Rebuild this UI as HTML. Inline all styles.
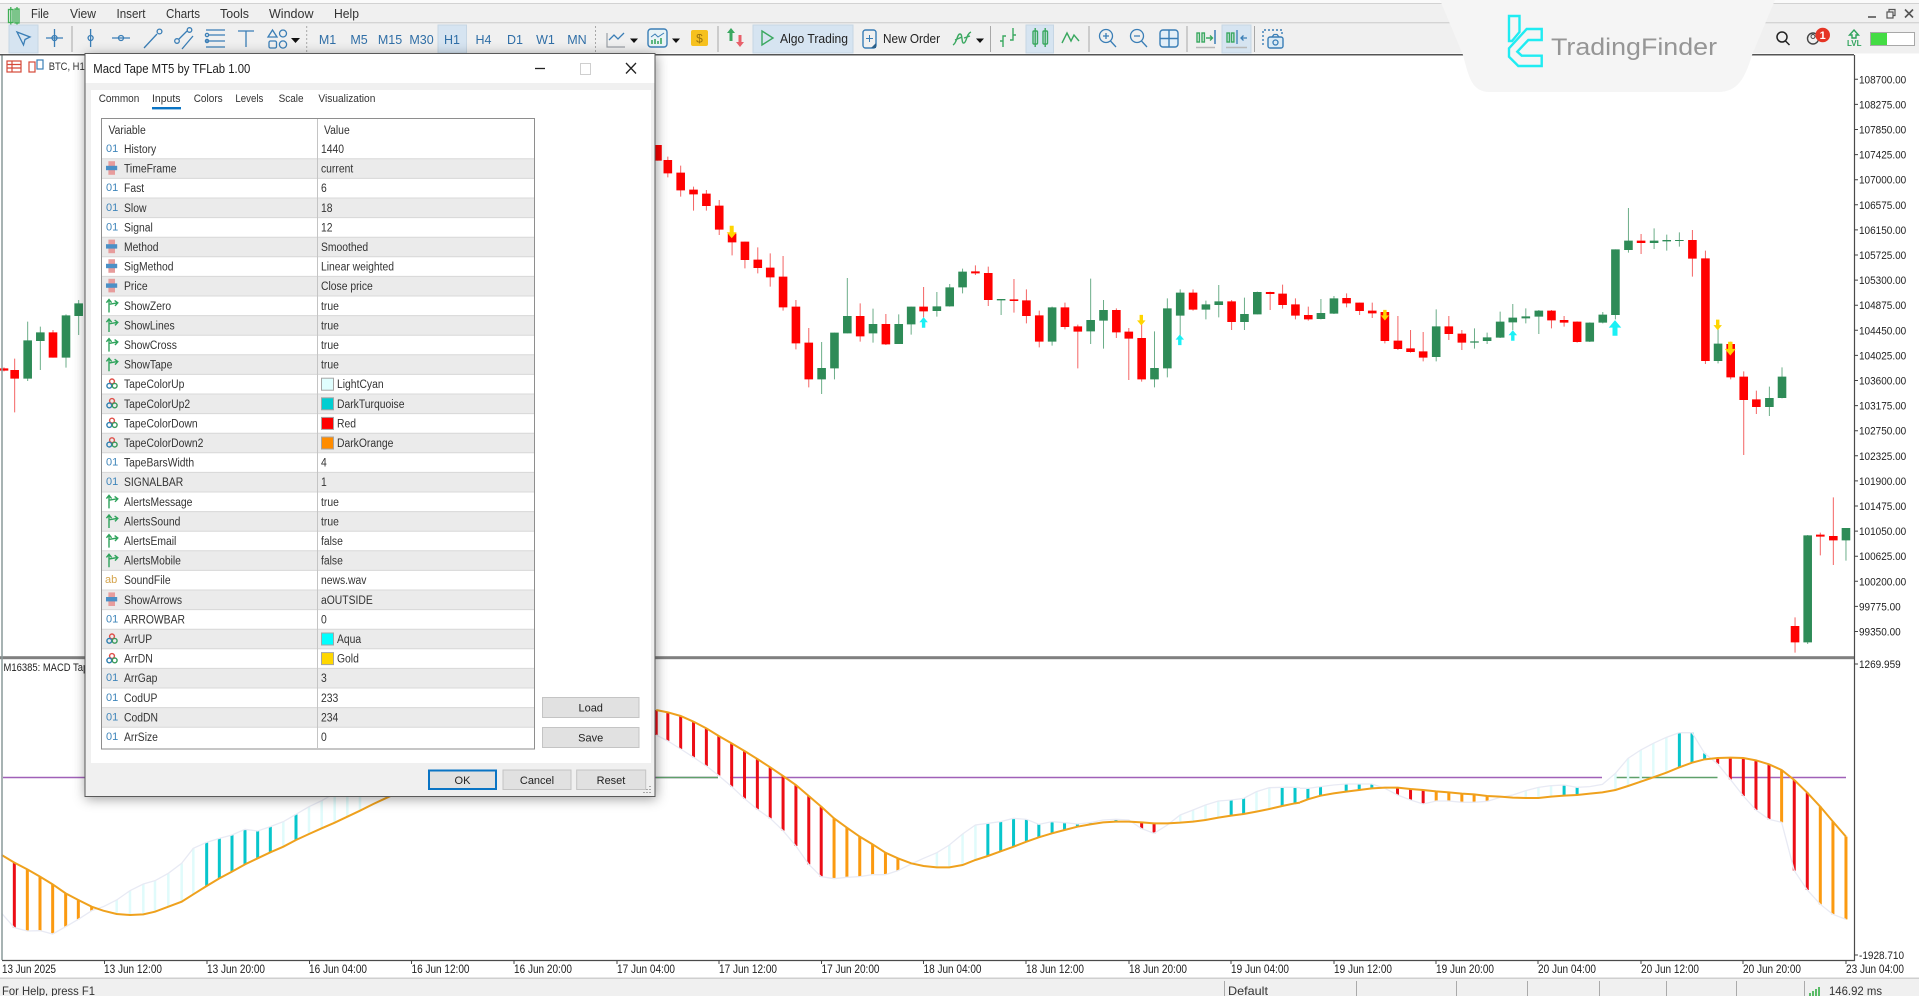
<!DOCTYPE html>
<html lang="en"><head><meta charset="utf-8"><title>Macd Tape MT5 by TFLab</title>
<style>
html,body{margin:0;padding:0;background:#fff;width:1919px;height:996px;overflow:hidden}
svg{display:block;font-family:"Liberation Sans",sans-serif;filter:blur(.35px)}
.n{fill:none;vector-effect:non-scaling-stroke}
.rw{stroke:#f03030;stroke-width:1;stroke-opacity:.75}
.gw{stroke:#2e8b57;stroke-width:1;stroke-opacity:.7}
.rb{stroke:#ff0000;stroke-width:8.6}
.gb{stroke:#2e8b57;stroke-width:8.6}
.sig{stroke:#efa11d;stroke-width:2}
.mac{stroke:#e8eaf4;stroke-width:1.3}
.br{stroke:#ec0d16;stroke-width:3}
.bo{stroke:#fb9a10;stroke-width:3}
.bt{stroke:#08c6cc;stroke-width:3}
.bl{stroke:#e0fbfb;stroke-width:2.5}
.i{fill:none;stroke:#3a7eb6;stroke-width:1.3}
.g{fill:none;stroke:#3aa860;stroke-width:1.4}
.tf{font-size:12.5px;fill:#2f6ea6;text-anchor:middle}
.btn{fill:#e1e1e1;stroke:#c4c4c4}
.bt2{font-size:11px;fill:#222;text-anchor:middle}
.one{font-size:11px;fill:#3f85ba}
</style></head><body>
<svg width="1919" height="996" viewBox="0 0 1919 996" xmlns="http://www.w3.org/2000/svg">
<defs>
<filter id="sh" x="-8%" y="-8%" width="116%" height="116%"><feDropShadow dx="1" dy="2" stdDeviation="6" flood-color="#000" flood-opacity=".38"/></filter>
<g id="en"><rect x="-3.2" y="-6.8" width="6.6" height="13.6" fill="#e79c9c"/><rect x="-5.6" y="-2.2" width="11.2" height="4.4" fill="#4b90c6"/></g>
<g id="bo"><path d="M-3 7V-5.5M-5.6-2.8-3-6-.4-2.8M-3-1.2 5-2.6M2.6-5 5.8-2.6 3 .4" fill="none" stroke="#2fa35c" stroke-width="1.4"/></g>
<g id="co" fill="none" stroke-width="1.4"><circle cx="0" cy="-2.6" r="2.4" stroke="#e0504a"/><circle cx="-2.7" cy="1.8" r="2.4" stroke="#2f7fb0"/><circle cx="2.7" cy="1.8" r="2.4" stroke="#3a9a5c"/></g>
<path id="up" d="M0-6.5 5-.5H2V6H-2V-.5H-5Z"/>
<path id="dn" d="M0 6.5 5 .5H2V-6H-2V.5H-5Z"/>
</defs>

<rect width="1919" height="996" fill="#fff"/>

<!-- left candles -->
<g transform="translate(0 280) scale(.33333)">
<path class="n rw" d="M12 262V274M44 236V397M159 150V233"/>
<path class="n gw" d="M83 125V303M121 140V270M198 103V263M236 60V165"/>
<path class="n rb" d="M12 265V272M44 270V296M159 157V233"/>
<path class="n gb" d="M83 181V296M121 157V183M198 106V233M236 70V108"/>
</g>
<!-- middle candles -->
<g transform="translate(650 120) scale(.41454 .33333)">
<path class="n rw" d="M18 75V122M43 110V172M74 137V230M105 200V272M136 210V272M167 240V345M198 330V406M229 365V445M260 382V460M290 400V500M321 408V572M352 540V688M383 624V802M507 550V665M569 582V675M660 501V592M785 436V465M816 440V558M878 477V578M908 508V610M939 572V682M1001 548V628M1032 614V745M1125 565V654M1155 624V780M1186 600V785M1310 508V572M1403 540V630M1496 515V570M1526 494V566M1557 535V598"/>
<path class="n gw" d="M414 666V822M445 638V778M476 474V640M538 566V668M600 583V672M630 560V644M692 516V590M723 492V560M754 446V520M847 537V585M970 560V677M1063 476V672M1094 540V686M1217 634V802M1248 535V772M1279 508V650M1341 542V598M1372 495V592M1434 533V630M1465 515V583"/>
<path class="n rb" d="M18 75V122M43 120V160M74 158V211M105 209V223M136 221V258M167 257V329M198 340V367M229 365V420M260 419V444M290 443V472M321 470V562M352 560V670M383 668V778M507 588V649M569 612V673M660 560V574M785 454V460M816 459V540M878 538V543M908 541V588M939 586V665M1001 562V621M1032 619V635M1125 570V637M1155 635V656M1186 654V778M1310 518V569M1403 544V606M1496 516V522M1526 521V555M1557 553V587"/>
<path class="n gb" d="M414 744V778M445 638V745M476 588V640M538 612V640M600 612V672M630 560V613M692 559V573M723 502V559M754 455V502M847 537V541M970 562V665M1063 600V634M1094 570V602M1217 744V778M1248 565V745M1279 518V587M1341 553V569M1372 544V555M1434 582V606M1465 516V583"/>
</g>
<!-- right candles -->
<g transform="translate(1300 190) scale(.39477 .33333)">
<path class="n rw" d="M21 350V392M118 310V352M151 338V375M183 338V384M215 365V460M248 378V480M280 420V488M312 426V514M377 378V450M410 420V480M637 360V415M669 378V410M702 394V458M864 132V192M994 120V260M1027 182V522M1091 455V568M1124 544V795M1156 602V672M1254 1282V1388M1318 1028V1096M1351 922V1125"/>
<path class="n gw" d="M53 327V388M86 318V372M345 358V514M442 415V476M474 428V462M507 365V444M539 342V420M572 355V400M605 360V432M734 397V456M767 366V400M799 178V388M832 54V188M897 115V177M929 134V182M961 127V170M1059 395V520M1189 590V678M1221 532V625M1286 1035V1362M1383 1014V1112"/>
<path class="n rb" d="M21 375V388M118 324V340M151 338V363M183 362V370M215 366V453M248 452V477M280 475V486M312 484V503M377 409V432M410 431V458M637 362V391M669 390V398M702 395V456M864 152V159M994 150V206M1027 205V513M1091 462V562M1124 560V630M1156 628V651M1254 1308V1357M1318 1034V1040M1351 1038V1051"/>
<path class="n gb" d="M53 369V387M86 325V371M345 409V501M442 454V458M474 442V453M507 395V443M539 383V397M572 379V385M605 362V380M734 398V455M767 374V398M799 178V375M832 152V180M897 152V159M929 150V154M961 150V153M1059 461V513M1189 624V651M1221 560V624M1286 1036V1357M1383 1014V1051"/>
</g>
<!-- arrows -->
<g fill="#ffd500">
<use href="#dn" transform="translate(731.7 231.7)"/>
<use href="#dn" transform="translate(1141.3 320) scale(.85)"/>
<use href="#dn" transform="translate(1384.9 315) scale(.85)"/>
<use href="#dn" transform="translate(1717.7 324.7) scale(.85)"/>
<use href="#dn" transform="translate(1730.3 348.3) scale(1.1)"/>
</g>
<g fill="#1af0f5">
<use href="#up" transform="translate(923.6 322.7) scale(.85)"/>
<use href="#up" transform="translate(1179.8 340) scale(.85)"/>
<use href="#up" transform="translate(1512.8 335.7) scale(.85)"/>
<use href="#up" transform="translate(1615 328.3) scale(1.25)"/>
</g>

<!-- zero level -->
<path d="M3 777.5H718M730 777.5H1602M1730 777.5H1846" fill="none" stroke="#a061b8" stroke-width="1.5"/>
<path d="M656 777.5H718M1615 777.5H1717.5" fill="none" stroke="#5fa06a" stroke-width="1.5"/>

<!-- indicator left -->
<g transform="translate(0 760) scale(.33333)">
<path class="n bl" d="M350 420V462M390 392V465M430 372V463M465 362V455M505 340V440M545 310V425M580 265V403M850 185V260M927 140V222M965 122V205M1004 110V188M1042 110V170M1080 110V152"/>
<path class="n br" d="M43 308V503"/>
<path class="n bo" d="M82 328V513M120 350V512M158 373V522M197 400V500M235 420V478M275 440V452"/>
<path class="n bt" d="M620 247V378M658 235V355M696 225V335M735 208V313M773 213V295M811 200V277M888 163V240"/>
<polyline class="n mac" points="5,460 43,503 82,513 120,512 158,522 197,500 235,478 275,452 310,440 350,420 390,392 430,372 465,362 505,340 545,310 580,265 620,247 658,235 696,225 735,208 773,213 811,200 850,185 888,163 927,140 965,122 1004,100"/>
<polyline class="n sig" points="5,285 43,308 82,328 120,350 158,373 197,400 235,420 275,440 310,452 350,462 390,465 430,463 465,455 505,440 545,425 580,403 620,378 658,355 696,335 735,313 773,295 811,277 850,260 888,240 927,222 965,205 1004,188 1042,170 1080,152 1120,132 1180,104"/>
</g>
<!-- indicator middle -->
<g transform="translate(650 660) scale(.41454 .33333)">
<path class="n bl" d="M692 578V622M722 555V622M754 522V615M785 495V600M1279 465V488M1310 450V485M1340 435V480M1371 423V473M1463 395V455M1494 383V447"/>
<path class="n br" d="M15 150V225M43 157V243M74 168V267M105 185V292M136 205V318M166 228V347M197 250V380M228 273V416M259 297V448M290 322V475M321 348V512M352 375V558M383 408V613M413 440V650M1186 487V506M1216 490V520"/>
<path class="n bo" d="M444 475V656M475 503V652M506 530V650M537 553V644M568 578V644M598 595V632"/>
<path class="n bt" d="M815 490V588M846 485V574M877 475V560M908 478V545M938 493V532M970 485V520M1000 488V510M1031 492V500M1062 488V493M1124 478V485M1402 420V467M1432 415V462M1525 382V438M1556 382V430"/>
<polyline class="n mac" points="15,225 43,243 74,267 105,292 136,318 166,347 197,380 228,416 259,448 290,475 321,512 352,558 383,613 413,650 444,656 475,652 506,650 537,644 568,644 598,632 630,612 660,595 692,578 722,555 754,522 785,495 815,490 846,485 877,475 908,478 938,493 970,485 1000,488 1031,492 1062,488 1093,480 1124,478 1155,480 1186,506 1216,520 1248,495 1279,465 1310,450 1340,435 1371,423 1402,420 1432,415 1463,395 1494,383 1525,382 1556,382 1568,383"/>
<polyline class="n sig" points="15,150 43,157 74,168 105,185 136,205 166,228 197,250 228,273 259,297 290,322 321,348 352,375 383,408 413,440 444,475 475,503 506,530 537,553 568,578 598,595 630,610 660,618 692,622 722,622 754,615 785,600 815,588 846,574 877,560 908,545 938,532 970,520 1000,510 1031,500 1062,493 1093,487 1124,485 1155,485 1186,487 1216,490 1248,490 1279,488 1310,485 1340,480 1371,473 1402,467 1432,462 1463,455 1494,447 1525,438 1556,430 1568,428"/>
</g>
<!-- indicator right -->
<g transform="translate(1300 660) scale(.39477 .33333)">
<path class="n bl" d="M572 392V414M604 382V414M636 377V410M799 340V390M831 295V378M863 270V365M895 250V352M928 232V338"/>
<path class="n br" d="M247 383V405M280 387V420M312 390V432M1058 294V312M1090 293V358M1123 294V408M1155 301V450M1188 313V478M1252 360V632M1285 398V690"/>
<path class="n bo" d="M345 394V423M377 397V423M410 401V427M441 403V427M474 408V424M1220 330V487M1318 440V733M1350 485V763M1383 530V778"/>
<path class="n bt" d="M20 385V418M52 380V407M117 372V395M150 372V390M182 372V385M669 375V407M702 382V405M961 218V322M993 218V308M1025 280V298"/>
<polyline class="n mac" points="0,385 20,385 52,380 85,375 117,372 150,372 182,372 215,385 247,405 280,420 312,432 345,423 377,423 410,427 441,427 474,424 507,412 539,405 572,392 604,382 636,377 669,375 702,382 734,380 766,373 799,340 831,295 863,270 895,250 928,232 961,218 993,218 1025,280 1058,312 1090,358 1123,408 1155,450 1188,478 1220,487 1252,632 1285,690 1318,733 1350,763 1383,778"/>
<polyline class="n sig" points="0,427 20,418 52,407 85,400 117,395 150,390 182,385 215,383 247,383 280,387 312,390 345,394 377,397 410,401 441,403 474,408 507,410 539,413 572,414 604,414 636,410 669,407 702,405 734,401 766,397 799,390 831,378 863,365 895,352 928,338 961,322 993,308 1025,298 1058,294 1090,293 1123,294 1155,301 1188,313 1220,330 1252,360 1285,398 1318,440 1350,485 1383,530"/>
</g>

<!-- frames -->
<rect x="0" y="656.2" width="1854" height="3" fill="#808080"/>
<path d="M2 55V960" stroke="#8a9a9a" stroke-width="1.5" fill="none"/>
<path d="M1854.5 55V961M2 960.5H1855" stroke="#4a4a4a" stroke-width="1.2" fill="none"/>
<path d="M1854 79.3h4M1854 104.4h4M1854 129.5h4M1854 154.6h4M1854 179.7h4M1854 204.8h4M1854 229.9h4M1854 255h4M1854 280.1h4M1854 305.2h4M1854 330.3h4M1854 355.4h4M1854 380.5h4M1854 405.6h4M1854 430.7h4M1854 455.8h4M1854 480.9h4M1854 506h4M1854 531.1h4M1854 556.2h4M1854 581.3h4M1854 606.4h4M1854 631.5h4M1854 664h4M1854 955h4M104.5 961v3M207 961v3M309.5 961v3M411.5 961v3M514 961v3M617 961v3M719 961v3M821.5 961v3M923.5 961v3M1026 961v3M1129 961v3M1231 961v3M1334 961v3M1436 961v3M1538 961v3M1641 961v3M1743 961v3M1846 961v3" stroke="#444" fill="none"/>

<!-- price labels -->
<g transform="translate(1859 0) scale(.87 1)" font-size="11.5" fill="#222">
<text y="83.3">108700.00</text><text y="108.4">108275.00</text><text y="133.5">107850.00</text><text y="158.6">107425.00</text><text y="183.7">107000.00</text><text y="208.8">106575.00</text><text y="233.9">106150.00</text><text y="259">105725.00</text><text y="284.1">105300.00</text><text y="309.2">104875.00</text><text y="334.3">104450.00</text><text y="359.4">104025.00</text><text y="384.5">103600.00</text><text y="409.6">103175.00</text><text y="434.7">102750.00</text><text y="459.8">102325.00</text><text y="484.9">101900.00</text><text y="510">101475.00</text><text y="535.1">101050.00</text><text y="560.2">100625.00</text><text y="585.3">100200.00</text><text y="610.4">99775.00</text><text y="635.5">99350.00</text><text y="668">1269.959</text><text y="959">-1928.710</text>
</g>
<!-- time labels -->
<g font-size="11.5" fill="#222">
<text x="2" y="973" textLength="54" lengthAdjust="spacingAndGlyphs">13 Jun 2025</text>
<text x="104" y="973" textLength="58" lengthAdjust="spacingAndGlyphs">13 Jun 12:00</text>
<text x="207" y="973" textLength="58" lengthAdjust="spacingAndGlyphs">13 Jun 20:00</text>
<text x="309" y="973" textLength="58" lengthAdjust="spacingAndGlyphs">16 Jun 04:00</text>
<text x="411.5" y="973" textLength="58" lengthAdjust="spacingAndGlyphs">16 Jun 12:00</text>
<text x="514" y="973" textLength="58" lengthAdjust="spacingAndGlyphs">16 Jun 20:00</text>
<text x="617" y="973" textLength="58" lengthAdjust="spacingAndGlyphs">17 Jun 04:00</text>
<text x="719" y="973" textLength="58" lengthAdjust="spacingAndGlyphs">17 Jun 12:00</text>
<text x="821.5" y="973" textLength="58" lengthAdjust="spacingAndGlyphs">17 Jun 20:00</text>
<text x="923.5" y="973" textLength="58" lengthAdjust="spacingAndGlyphs">18 Jun 04:00</text>
<text x="1026" y="973" textLength="58" lengthAdjust="spacingAndGlyphs">18 Jun 12:00</text>
<text x="1129" y="973" textLength="58" lengthAdjust="spacingAndGlyphs">18 Jun 20:00</text>
<text x="1231" y="973" textLength="58" lengthAdjust="spacingAndGlyphs">19 Jun 04:00</text>
<text x="1334" y="973" textLength="58" lengthAdjust="spacingAndGlyphs">19 Jun 12:00</text>
<text x="1436" y="973" textLength="58" lengthAdjust="spacingAndGlyphs">19 Jun 20:00</text>
<text x="1538" y="973" textLength="58" lengthAdjust="spacingAndGlyphs">20 Jun 04:00</text>
<text x="1641" y="973" textLength="58" lengthAdjust="spacingAndGlyphs">20 Jun 12:00</text>
<text x="1743" y="973" textLength="58" lengthAdjust="spacingAndGlyphs">20 Jun 20:00</text>
<text x="1846" y="973" textLength="58" lengthAdjust="spacingAndGlyphs">23 Jun 04:00</text>
</g>

<!-- chart labels -->
<g fill="none" stroke-width="1.2">
<rect x="7" y="61" width="14" height="11" stroke="#d5493a"/><path d="M7 64.5H21M7 68H21M12 61V72" stroke="#d5493a"/>
<rect x="29" y="62" width="6" height="10" stroke="#d5493a"/><rect x="37" y="60" width="6" height="9" stroke="#3a7eb6"/>
</g>
<text x="48.7" y="70" font-size="11" fill="#333" textLength="36" lengthAdjust="spacingAndGlyphs">BTC, H1</text>
<text x="3.5" y="671" font-size="11" fill="#222" textLength="90" lengthAdjust="spacingAndGlyphs">M16385: MACD Tape</text>

<!-- top bars -->
<rect x="0" y="0" width="1919" height="3" fill="#fafafa"/>
<rect x="0" y="3" width="1919" height="1.2" fill="#d2d2d2"/>
<rect x="0" y="4" width="1919" height="18" fill="#f0f0f0"/>
<rect x="0" y="22" width="1919" height="1.6" fill="#d4d4d4"/>
<rect x="0" y="24" width="1919" height="29.5" fill="#f0f0f0"/>
<rect x="0" y="54" width="1854" height="1.5" fill="#555"/>

<!-- app logo + menu -->
<g fill="none" stroke="#3fae55" stroke-width="1.3"><rect x="8.5" y="9.5" width="4.5" height="13"/><rect x="15" y="9" width="4" height="14"/><path d="M10.8 7V25M17 7V25"/></g>
<g font-size="12.5" fill="#333">
<text x="31" y="18" textLength="18" lengthAdjust="spacingAndGlyphs">File</text>
<text x="70" y="18" textLength="26" lengthAdjust="spacingAndGlyphs">View</text>
<text x="116.5" y="18" textLength="29" lengthAdjust="spacingAndGlyphs">Insert</text>
<text x="166" y="18" textLength="34" lengthAdjust="spacingAndGlyphs">Charts</text>
<text x="220" y="18" textLength="29" lengthAdjust="spacingAndGlyphs">Tools</text>
<text x="269" y="18" textLength="44.5" lengthAdjust="spacingAndGlyphs">Window</text>
<text x="334" y="18" textLength="25" lengthAdjust="spacingAndGlyphs">Help</text>
</g>

<!-- toolbar active -->
<g fill="#d6e4f1" stroke="#c6d6e4">
<rect x="9" y="25" width="29" height="28"/><rect x="438" y="25" width="28.5" height="28"/><rect x="753" y="25" width="100" height="28"/><rect x="1026" y="25" width="27.5" height="28"/><rect x="1222" y="25" width="29" height="28"/>
</g>
<g stroke="#a8a8a8" fill="none">
<path d="M72 26V52M718 26V52M990.5 26V52M1089 26V52M1187 26V52M1254.5 26V52"/>
<path d="M306.7 26V52M595.5 26V52" stroke-dasharray="2 2"/>
</g>
<!-- draw tools -->
<path class="i" d="M17 32 30 37 25 39.5 23.5 45Z"/>
<path class="i" d="M54.5 29V47M46 38H63"/><circle class="i" cx="54.5" cy="38" r="2.5"/>
<path class="i" d="M90.6 29V47"/><circle class="i" cx="90.6" cy="38" r="2.5"/>
<path class="i" d="M112 38H130"/><circle class="i" cx="121" cy="38" r="2.5"/>
<path class="i" d="M144 48 157 34"/><circle class="i" cx="159.5" cy="31.5" r="2.4"/>
<path class="i" d="M179 39 187 31M182 49 193 36"/><circle class="i" cx="177" cy="41" r="2.3"/><circle class="i" cx="189.5" cy="30" r="2.3"/>
<path class="i" d="M206 30H225M209 35H225M206 41H225M206 47H225"/><circle class="i" cx="207" cy="35" r="1.6"/><circle class="i" cx="207" cy="41" r="1.6"/>
<path class="i" d="M238 31H254M246 31V47"/>
<path class="i" d="M272.5 30 277 37H268Z"/><circle class="i" cx="283" cy="33.5" r="3.5"/><rect class="i" x="269" y="41" width="7.5" height="7" rx="1.5"/><circle class="i" cx="283" cy="44.5" r="3.6"/>
<path d="M291 38h9l-4.5 5zM630 38.5h8l-4 4.5zM672 38.5h8l-4 4.5zM976 38.5h8l-4 4.5z" fill="#111"/>
<!-- timeframes -->
<text class="tf" x="327.5" y="44">M1</text><text class="tf" x="359" y="44">M5</text><text class="tf" x="390" y="44">M15</text><text class="tf" x="421.5" y="44">M30</text><text class="tf" x="452" y="44">H1</text><text class="tf" x="483.5" y="44">H4</text><text class="tf" x="515" y="44">D1</text><text class="tf" x="545.5" y="44">W1</text><text class="tf" x="577" y="44">MN</text>
<!-- chart type -->
<path d="M607 33V47H625" fill="none" stroke="#9aa0a6" stroke-width="1.2"/><path class="i" d="M609 40 614 35 618 39 624 33"/>
<rect x="648" y="29" width="19" height="18" rx="3" fill="#e8f3f6" stroke="#3a7eb6" stroke-width="1.4"/><path d="M651 37 655 34 658 37 664 33" fill="none" stroke="#3a7eb6"/><path d="M652 44V40M655 44V39M658 44V41M661 44V38" stroke="#3aa860" stroke-width="1.6"/>
<rect x="691" y="30" width="17" height="16" rx="2" fill="#f6c11e"/><text x="699.5" y="42.5" font-size="12" fill="#9b7410" text-anchor="middle">$</text>
<path d="M731 28 735 33H732.5V41H729.5V33H727Z" fill="#3aa860"/><path d="M740 47 744 42H741.5V35H738.5V42H736Z" fill="#e8606a"/>
<path class="g" d="M762 31 773 38 762 45Z"/>
<text x="780" y="43" font-size="12.5" fill="#222" textLength="68" lengthAdjust="spacingAndGlyphs">Algo Trading</text>
<rect x="863" y="30" width="13" height="18" rx="2.5" fill="none" stroke="#3a7eb6" stroke-width="1.4"/><path d="M869.5 35V42M866 38.5H873" stroke="#3a7eb6" fill="none"/><path d="M871 48 876 43V48Z" fill="#2c5f88"/>
<text x="883" y="43" font-size="12.5" fill="#222" textLength="57" lengthAdjust="spacingAndGlyphs">New Order</text>
<path class="g" d="M953 45C957 43 957 34 960 34S961 44 964 43 966 34 971 32M955 40 962 37M964 38 970 36"/>
<path class="g" d="M1003 47V36H1006M1003 41H1000M1013 28V40H1010M1013 35H1016" stroke-width="1.6"/>
<g class="g" stroke-width="1.6"><rect x="1033" y="31" width="4.5" height="13" rx="1"/><rect x="1043" y="31" width="4.5" height="13" rx="1"/><path d="M1035.2 28V47M1045.2 28V47"/></g>
<path class="g" d="M1062 43 1067 33 1071 41 1074 35 1079 41" stroke-width="1.6"/>
<circle class="i" cx="1106" cy="36" r="6.5"/><path class="i" d="M1110.5 41 1116 47M1103 36H1109M1106 33V39"/>
<circle class="i" cx="1137" cy="36" r="6.5"/><path class="i" d="M1141.5 41 1147 47M1134 36H1140"/>
<rect x="1160" y="30" width="18" height="17" rx="3" fill="#e3eff8" stroke="#3a7eb6" stroke-width="1.4"/><path d="M1169 30V47M1160 38.5H1178" stroke="#3a7eb6" stroke-width="1.4" fill="none"/>
<g class="g" stroke-width="1.6"><rect x="1197" y="33" width="2.4" height="9"/><rect x="1202" y="33" width="2.4" height="9"/><path d="M1206 38H1212M1210 35.5 1212.5 38 1210 40.5"/></g><path d="M1215 30V44" stroke="#3a7eb6" stroke-width="1.5"/><path d="M1196 47.5H1215" stroke="#b8b8b8" stroke-width="1.4"/>
<g class="g" stroke-width="1.6"><rect x="1227" y="33" width="2.4" height="9"/><rect x="1231.5" y="33" width="2.4" height="9"/></g><path class="i" d="M1237 30V44M1247 38H1241M1243.5 35.5 1241 38 1243.5 40.5"/><path d="M1226 47.5H1247" stroke="#b8b8b8" stroke-width="1.4"/>
<path d="M1263 45V30H1282V34" fill="none" stroke="#3a7eb6" stroke-width="1.4" stroke-dasharray="2 2"/><rect x="1268" y="37" width="15" height="11" rx="2" fill="#dcebf5" stroke="#3a7eb6" stroke-width="1.4"/><circle class="i" cx="1275.5" cy="42.5" r="2.5"/><path class="i" d="M1272 37 1274 34.5H1277L1279 37"/>

<!-- watermark -->
<path d="M1440 0H1775L1752 55C1745 78 1738 92 1718 92H1490C1472 92 1469 78 1463 55Z" fill="#f5f5f5"/>
<path d="M1509 16H1519.5V32L1512 41H1509ZM1541.7 29H1526.7L1509 48.3V56.7L1518.3 66H1541.7V55.7H1521.7L1517.3 51.7 1528.3 40H1541.7Z" fill="none" stroke="#1fecf2" stroke-width="2.4"/>
<text x="1551" y="55" font-size="24.5" fill="#969696" textLength="166" lengthAdjust="spacingAndGlyphs">TradingFinder</text>

<!-- right controls -->
<path d="M1868 17H1876" stroke="#555" stroke-width="1.6"/>
<g fill="none" stroke="#555" stroke-width="1.2"><rect x="1887" y="12" width="6" height="6"/><path d="M1889 12V9.5H1895V15.5H1893"/><path d="M1905 9.5 1913 17.5M1913 9.5 1905 17.5" stroke-width="1.6"/></g>
<circle cx="1782" cy="37" r="5" fill="none" stroke="#222" stroke-width="1.5"/><path d="M1785.5 41 1789.5 45" stroke="#222" stroke-width="1.5"/>
<circle cx="1813" cy="38.5" r="5.5" fill="none" stroke="#444" stroke-width="1.4"/><circle cx="1813" cy="36.5" r="2" fill="none" stroke="#444"/>
<circle cx="1822.7" cy="35" r="7.3" fill="#e53525"/><text x="1822.7" y="39" font-size="11" font-weight="bold" fill="#fff" text-anchor="middle">1</text>
<path d="M1854 30 1858.5 35H1856V38H1852V35H1849.5Z" fill="none" stroke="#2fa35c" stroke-width="1.4"/><text x="1854.2" y="46" font-size="8" fill="#2fa35c" text-anchor="middle" font-weight="bold">LVL</text>
<rect x="1870.5" y="32.5" width="44" height="13" fill="#fff" stroke="#a8a8a8"/><rect x="1871" y="33" width="16" height="12" fill="#44dc44"/>

<!-- status bar -->
<rect x="0" y="977.5" width="1919" height="1.5" fill="#cfcfcf"/>
<rect x="0" y="979" width="1919" height="17" fill="#f0f0f0"/>
<text x="2" y="995" font-size="12" fill="#333" textLength="93" lengthAdjust="spacingAndGlyphs">For Help, press F1</text>
<path d="M1224.5 981V996M1356.5 981V996M1456.5 981V996M1527.5 981V996M1599.5 981V996M1666.5 981V996M1736.5 981V996M1804.5 981V996" stroke="#aaa" fill="none"/>
<text x="1228" y="995" font-size="12" fill="#333" textLength="40" lengthAdjust="spacingAndGlyphs">Default</text>
<path d="M1810 996V993M1813 996V991M1816 996V989M1819 996V987" stroke="#3fb24f" stroke-width="1.7"/>
<text x="1829" y="995" font-size="12" fill="#333" textLength="53" lengthAdjust="spacingAndGlyphs">146.92 ms</text>

<!-- dialog -->
<rect x="85" y="53.5" width="570" height="743" fill="#f0f0f0" stroke="#5a5a5a" filter="url(#sh)"/>
<rect x="85.5" y="54" width="569" height="29" fill="#fff"/>
<rect x="91" y="90" width="560" height="673" fill="#fff"/>
<text x="93.3" y="73" font-size="13" fill="#1c1c1c" textLength="157" lengthAdjust="spacingAndGlyphs">Macd Tape MT5 by TFLab 1.00</text>
<path d="M535 68.5H545" stroke="#222" stroke-width="1.3"/>
<rect x="580.5" y="63.5" width="10" height="11" fill="none" stroke="#cfcfcf"/>
<path d="M626 63 636 73.5M636 63 626 73.5" stroke="#222" stroke-width="1.3"/>
<g font-size="11" fill="#333">
<text x="98.7" y="102" textLength="40.6" lengthAdjust="spacingAndGlyphs">Common</text>
<text x="152" y="102" textLength="28.5" lengthAdjust="spacingAndGlyphs">Inputs</text>
<text x="193.7" y="102" textLength="29" lengthAdjust="spacingAndGlyphs">Colors</text>
<text x="235.4" y="102" textLength="28" lengthAdjust="spacingAndGlyphs">Levels</text>
<text x="278.6" y="102" textLength="25" lengthAdjust="spacingAndGlyphs">Scale</text>
<text x="318.4" y="102" textLength="57" lengthAdjust="spacingAndGlyphs">Visualization</text>
</g>
<rect x="152" y="107" width="29" height="2.4" fill="#0a74c4"/>

<!-- table -->
<rect x="101.5" y="118.5" width="433" height="630.5" fill="#fff" stroke="#8e8e8e"/>
<g fill="#ebebeb">
<rect x="102" y="158.8" width="432" height="19.6"/><rect x="102" y="198" width="432" height="19.6"/><rect x="102" y="237.2" width="432" height="19.6"/><rect x="102" y="276.4" width="432" height="19.6"/><rect x="102" y="315.6" width="432" height="19.6"/><rect x="102" y="354.8" width="432" height="19.6"/><rect x="102" y="394" width="432" height="19.6"/><rect x="102" y="433.2" width="432" height="19.6"/><rect x="102" y="472.4" width="432" height="19.6"/><rect x="102" y="511.6" width="432" height="19.6"/><rect x="102" y="550.8" width="432" height="19.6"/><rect x="102" y="590" width="432" height="19.6"/><rect x="102" y="629.2" width="432" height="19.6"/><rect x="102" y="668.4" width="432" height="19.6"/><rect x="102" y="707.6" width="432" height="19.6"/>
</g>
<path d="M102 158.8H534M102 178.4H534M102 198H534M102 217.6H534M102 237.2H534M102 256.8H534M102 276.4H534M102 296H534M102 315.6H534M102 335.2H534M102 354.8H534M102 374.4H534M102 394H534M102 413.6H534M102 433.2H534M102 452.8H534M102 472.4H534M102 492H534M102 511.6H534M102 531.2H534M102 550.8H534M102 570.4H534M102 590H534M102 609.6H534M102 629.2H534M102 648.8H534M102 668.4H534M102 688H534M102 707.6H534M102 727.2H534" stroke="#d8d8d8" fill="none"/>
<path d="M317.5 119V748" stroke="#c4c4c4" fill="none"/>
<g transform="translate(108.5 0) scale(.9 1)" font-size="11.5" fill="#333"><text y="134">Variable</text></g>
<g transform="translate(324 0) scale(.9 1)" font-size="11.5" fill="#333"><text y="134">Value</text></g>
<!-- names -->
<g transform="translate(124 0) scale(.9 1)" font-size="11.5" fill="#333">
<text y="153">History</text><text y="172.6">TimeFrame</text><text y="192.2">Fast</text><text y="211.8">Slow</text><text y="231.4">Signal</text><text y="251">Method</text><text y="270.6">SigMethod</text><text y="290.2">Price</text><text y="309.8">ShowZero</text><text y="329.4">ShowLines</text><text y="349">ShowCross</text><text y="368.6">ShowTape</text><text y="388.2">TapeColorUp</text><text y="407.8">TapeColorUp2</text><text y="427.4">TapeColorDown</text><text y="447">TapeColorDown2</text><text y="466.6">TapeBarsWidth</text><text y="486.2">SIGNALBAR</text><text y="505.8">AlertsMessage</text><text y="525.4">AlertsSound</text><text y="545">AlertsEmail</text><text y="564.6">AlertsMobile</text><text y="584.2">SoundFile</text><text y="603.8">ShowArrows</text><text y="623.4">ARROWBAR</text><text y="643">ArrUP</text><text y="662.6">ArrDN</text><text y="682.2">ArrGap</text><text y="701.8">CodUP</text><text y="721.4">CodDN</text><text y="741">ArrSize</text>
</g>
<!-- values -->
<g transform="translate(321 0) scale(.9 1)" font-size="11.5" fill="#333">
<text y="153">1440</text><text y="172.6">current</text><text y="192.2">6</text><text y="211.8">18</text><text y="231.4">12</text><text y="251">Smoothed</text><text y="270.6">Linear weighted</text><text y="290.2">Close price</text><text y="309.8">true</text><text y="329.4">true</text><text y="349">true</text><text y="368.6">true</text><text y="466.6">4</text><text y="486.2">1</text><text y="505.8">true</text><text y="525.4">true</text><text y="545">false</text><text y="564.6">false</text><text y="584.2">news.wav</text><text y="603.8">aOUTSIDE</text><text y="623.4">0</text><text y="682.2">3</text><text y="701.8">233</text><text y="721.4">234</text><text y="741">0</text>
</g>
<g transform="translate(337 0) scale(.9 1)" font-size="11.5" fill="#333">
<text y="388.2">LightCyan</text><text y="407.8">DarkTurquoise</text><text y="427.4">Red</text><text y="447">DarkOrange</text><text y="643">Aqua</text><text y="662.6">Gold</text>
</g>
<g stroke="#a5a5a5">
<rect x="321.5" y="378.2" width="12" height="12" fill="#e0ffff"/><rect x="321.5" y="397.8" width="12" height="12" fill="#00ced1"/><rect x="321.5" y="417.4" width="12" height="12" fill="#f00"/><rect x="321.5" y="437" width="12" height="12" fill="#ff8c00"/><rect x="321.5" y="633" width="12" height="12" fill="#0ff"/><rect x="321.5" y="652.6" width="12" height="12" fill="#ffd700"/>
</g>
<!-- 01 icons -->
<g class="one">
<text x="106" y="152">01</text><text x="106" y="191.2">01</text><text x="106" y="210.8">01</text><text x="106" y="230.4">01</text><text x="106" y="465.6">01</text><text x="106" y="485.2">01</text><text x="106" y="622.4">01</text><text x="106" y="681.2">01</text><text x="106" y="700.8">01</text><text x="106" y="720.4">01</text><text x="106" y="740">01</text>
</g>
<text x="105" y="583" font-size="11" fill="#d5a44c">ab</text>
<use href="#en" x="111.6" y="168"/><use href="#en" x="111.6" y="246.4"/><use href="#en" x="111.6" y="266"/><use href="#en" x="111.6" y="285.6"/><use href="#en" x="111.6" y="599.2"/>
<use href="#bo" x="112" y="305.5"/><use href="#bo" x="112" y="325"/><use href="#bo" x="112" y="344.6"/><use href="#bo" x="112" y="364.2"/><use href="#bo" x="112" y="501.4"/><use href="#bo" x="112" y="521"/><use href="#bo" x="112" y="540.6"/><use href="#bo" x="112" y="560.2"/>
<use href="#co" x="112" y="384"/><use href="#co" x="112" y="403.6"/><use href="#co" x="112" y="423.2"/><use href="#co" x="112" y="442.8"/><use href="#co" x="112" y="639"/><use href="#co" x="112" y="658.6"/>

<!-- buttons -->
<rect class="btn" x="542.5" y="697.5" width="96.5" height="20"/><text class="bt2" x="590.7" y="711.5">Load</text>
<rect class="btn" x="542.5" y="727.5" width="96.5" height="20"/><text class="bt2" x="590.7" y="741.5">Save</text>
<rect x="429" y="770.5" width="67" height="18.5" fill="#e1e1e1" stroke="#0a74c4" stroke-width="2"/><text class="bt2" x="462.5" y="784">OK</text>
<rect class="btn" x="503" y="770" width="68" height="19.5"/><text class="bt2" x="537" y="784">Cancel</text>
<rect class="btn" x="576.7" y="770" width="69" height="19.5"/><text class="bt2" x="611" y="784">Reset</text>
<path d="M650 786v1M647 789v1M650 789v1M644 792v1M647 792v1M650 792v1" stroke="#8a8a8a" stroke-width="1.4"/>
</svg>
</body></html>
